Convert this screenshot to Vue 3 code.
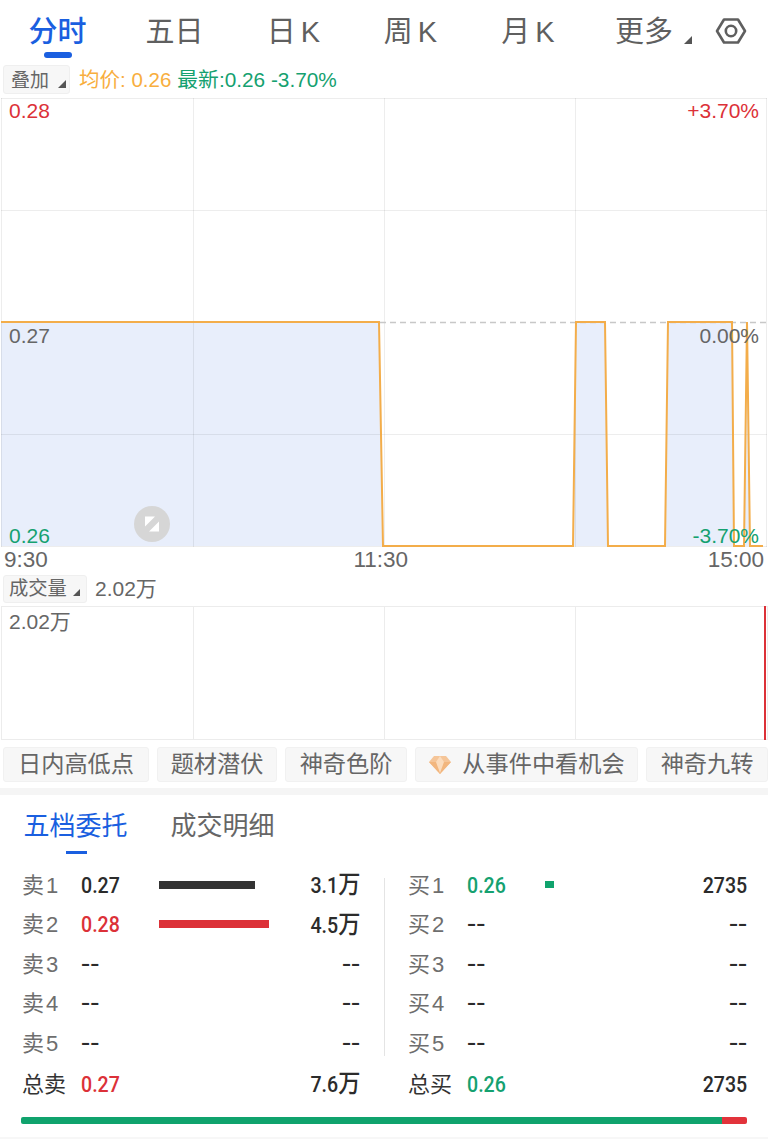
<script setup>
const tabs = ['分时', '五日', '日 K', '周 K', '月 K', '更多']
const pills = [
  { t: '日内高低点', w: 146 },
  { t: '题材潜伏', w: 120 },
  { t: '神奇色阶', w: 122 },
  { t: '从事件中看机会', w: 223, gem: true },
  { t: '神奇九转', w: 122 },
]
const sell = [
  { l: '卖', n: 1, p: '0.27', c: 'dark', bar: 96, bc: '#333333', q: '3.1', u: '万' },
  { l: '卖', n: 2, p: '0.28', c: 'red', bar: 110, bc: '#dc3138', q: '4.5', u: '万' },
  { l: '卖', n: 3, p: '--', c: 'dark', bar: 0, q: '--' },
  { l: '卖', n: 4, p: '--', c: 'dark', bar: 0, q: '--' },
  { l: '卖', n: 5, p: '--', c: 'dark', bar: 0, q: '--' },
]
const buy = [
  { l: '买', n: 1, p: '0.26', c: 'green', bar: 9, bc: '#10a36d', q: '2735' },
  { l: '买', n: 2, p: '--', c: 'dark', bar: 0, q: '--' },
  { l: '买', n: 3, p: '--', c: 'dark', bar: 0, q: '--' },
  { l: '买', n: 4, p: '--', c: 'dark', bar: 0, q: '--' },
  { l: '买', n: 5, p: '--', c: 'dark', bar: 0, q: '--' },
]
const cols = [
  { rows: sell, total: '总卖', tp: '0.27', tc: 'red', tq: '7.6', tu: '万' },
  { rows: buy, total: '总买', tp: '0.26', tc: 'green', tq: '2735' },
]
const line = 'M1 322 H379 L383 546 H573 L576 322 H605 L608 546 H665 L668 322 H732 L734 546 H744 L747 322 L750 546 H763'
const fill = line + ' V546 H1 Z'
</script>

<template>
  <div class="page">
    <nav class="nav">
      <div v-for="(t, i) in tabs" :key="t" class="tab" :class="{ on: i === 0 }">
        {{ t }}<i v-if="i === 5" class="tri tri-more"></i>
      </div>
      <svg class="hex" width="32" height="32" viewBox="0 0 32 32" fill="none" stroke="#5f5f5f" stroke-width="2.6">
        <path d="M9 4.5 H23 L30 16 L23 27.5 H9 L2 16 Z" stroke-linejoin="round" />
        <circle cx="16" cy="16" r="5.2" />
      </svg>
    </nav>

    <div class="legend top-legend">
      <div class="chip chip-add">叠加<i class="tri"></i></div>
      <span class="orange">均价: 0.26</span>
      <span class="green leg2">最新:0.26 -3.70%</span>
    </div>

    <div class="chart price">
      <svg class="plot" width="768" height="450" viewBox="0 97 768 450">
        <path :d="fill" fill="#e8eefb" />
        <g stroke="rgba(0,0,0,.07)" stroke-width="1" fill="none" shape-rendering="crispEdges">
          <path d="M1 98.5 H767 M1 210.5 H767 M1 434.5 H767 M1 546.5 H767" />
          <path d="M1.5 98 V547 M193.5 98 V547 M384.5 98 V547 M575.5 98 V547 M766.5 98 V547" />
        </g>
        <path d="M380 322.5 H767" stroke="#c8c8c8" stroke-width="1.4" stroke-dasharray="6 4" fill="none" />
        <path :d="line" stroke="#f3ad4a" stroke-width="2" fill="none" stroke-linejoin="miter" />
      </svg>
      <span class="lab tl red">0.28</span>
      <span class="lab tr red">+3.70%</span>
      <span class="lab ml gray">0.27</span>
      <span class="lab mr gray">0.00%</span>
      <span class="lab bl green">0.26</span>
      <span class="lab br green">-3.70%</span>
      <svg class="mark" width="36" height="36" viewBox="0 0 36 36">
        <circle cx="18" cy="18" r="18" fill="#d6d6d6" />
        <path d="M11 10.5 H21 L11 20.5 Z M25 25.5 H15 L25 15.5 Z" fill="#fff" />
      </svg>
    </div>

    <div class="times"><span>9:30</span><span>11:30</span><span>15:00</span></div>

    <div class="legend vol-legend">
      <div class="chip chip-vol">成交量<i class="tri"></i></div>
      <span class="gray vol-val">2.02万</span>
    </div>

    <div class="chart volume">
      <span class="lab vl gray">2.02万</span>
      <i class="vline"></i>
    </div>

    <div class="pills">
      <div v-for="p in pills" :key="p.t" class="pill" :style="{ width: p.w + 'px' }">
        <svg v-if="p.gem" class="gem" width="24" height="20" viewBox="0 0 24 20">
          <path d="M6 1 H18 L23 7 L12 19 L1 7 Z" fill="#f5c598" />
          <path d="M1 7 H23 L12 19 Z" fill="#f2b67e" />
          <path d="M8 7 L12 1 L16 7 L12 18 Z" fill="#fbdcbd" />
        </svg>
        {{ p.t }}
      </div>
    </div>

    <div class="gap"></div>

    <div class="subtabs">
      <div class="st on">五档委托<i></i></div>
      <div class="st">成交明细</div>
    </div>

    <div class="book">
      <div v-for="(c, ci) in cols" :key="ci" class="col" :class="ci ? 'col-b' : 'col-s'">
        <div v-for="r in c.rows" :key="r.l + r.n" class="row">
          <span class="rl">{{ r.l }} {{ r.n }}</span>
          <span class="num rp" :class="r.c"><b :class="{ dash: r.p === '--' }">{{ r.p }}</b></span>
          <span class="barwrap"><i v-if="r.bar" :style="{ width: r.bar + 'px', background: r.bc }" :class="{ dot: r.bar < 20 }"></i></span>
          <span class="num rq"><b :class="{ dash: r.q === '--' }">{{ r.q }}<em v-if="r.u">{{ r.u }}</em></b></span>
        </div>
        <div class="row total">
          <span class="rl tt">{{ c.total }}</span>
          <span class="num rp" :class="c.tc"><b>{{ c.tp }}</b></span>
          <span class="barwrap"></span>
          <span class="num rq"><b>{{ c.tq }}<em v-if="c.tu">{{ c.tu }}</em></b></span>
        </div>
      </div>
      <i class="divider"></i>
    </div>

    <div class="ratio"><i class="rg"></i><i class="rr"></i></div>
    <div class="foot"></div>
  </div>
</template>

<style>
html, body { margin: 0; background: #fff; }
</style>

<style scoped>
.page { width: 768px; height: 1139px; overflow: hidden; position: relative; background: #fff;
  font-family: "Liberation Sans", "Noto Sans CJK SC", sans-serif; color: #5f5f5f; }
i { display: block; font-style: normal; }
.red { color: #dc3138; }
.green { color: #15a170; }
.orange { color: #f8ae3e; }
.gray { color: #666; }
.dark { color: #2b2b2b; }

.nav { height: 65px; display: flex; position: relative; }
.tab { flex: none; height: 63px; line-height: 64px; text-align: center; font-size: 29px; word-spacing: -3px; position: relative; color: #5f5f5f; }
.tab:nth-child(1) { width: 115px; }
.tab:nth-child(2) { width: 119px; }
.tab:nth-child(3) { width: 119px; }
.tab:nth-child(4) { width: 115px; }
.tab:nth-child(5) { width: 120px; }
.tab:nth-child(6) { width: 112px; }
.tab.on { color: #1a5fe0; font-weight: 500; }
.tab.on::after { content: ""; position: absolute; left: 44px; top: 52px; width: 28px; height: 6px; border-radius: 3px; background: #1a5fe0; }
.tri { display: inline-block; width: 0; height: 0; border-style: solid; border-width: 0 0 8px 8px; border-color: transparent transparent #555 transparent; }
.tri-more { position: absolute; left: 96px; top: 36px; }
.hex { position: absolute; left: 715px; top: 15px; }

.legend { display: flex; align-items: flex-start; font-size: 20.5px; line-height: 30px; white-space: nowrap; }
.top-legend { height: 32px; }
.chip { background: #f7f7f7; border: 1px solid #efefef; border-radius: 3px; box-sizing: border-box; position: relative; color: #666; }
.chip .tri { position: absolute; right: 3px; bottom: 5px; }
.chip-add { margin-left: 3px; width: 67px; height: 29px; padding-left: 7px; font-size: 19px; line-height: 29px; }
.orange { margin-left: 9px; }
.leg2 { margin-left: 6px; font-size: 20.8px; }

.chart { position: relative; }
.price { height: 450px; }
.plot { display: block; }
.lab { position: absolute; font-size: 21px; line-height: 24px; white-space: nowrap; }
.tl { left: 9px; top: 2px; }
.tr { right: 9px; top: 2px; }
.ml { left: 9px; top: 227px; }
.mr { right: 9px; top: 227px; }
.bl { left: 9px; top: 427px; }
.br { right: 9px; top: 427px; }
.mark { position: absolute; left: 134px; top: 409px; }

.times { height: 29px; margin-top: -1px; padding: 0 4px; display: flex; justify-content: space-between; font-size: 22.5px; line-height: 27px; color: #666; }
.times span:nth-child(2) { margin-left: 6px; }
.vol-legend { height: 31px; }
.chip-vol { margin-left: 3px; width: 84px; height: 28px; padding-left: 5px; font-size: 19.3px; line-height: 26px; }
.chip-vol .tri { right: 6px; bottom: 6px; border-width: 0 0 7px 7px; }
.vol-val { margin-left: 8px; font-size: 21px; line-height: 27px; }

.volume { height: 134px; box-sizing: border-box; margin-left: 1px; border: 1px solid #ececec;
  background: linear-gradient(#ececec, #ececec) 191px 0 / 1px 100% no-repeat,
    linear-gradient(#ececec, #ececec) 382px 0 / 1px 100% no-repeat,
    linear-gradient(#ececec, #ececec) 573px 0 / 1px 100% no-repeat; }
.vl { left: 7px; top: 3px; font-size: 21px; }
.vline { position: absolute; right: 1px; top: -1px; bottom: -1px; width: 2px; background: #dc3138; }

.pills { display: flex; gap: 8px; margin-top: 7px; margin-left: 3px; height: 35px; white-space: nowrap; }
.pill { flex: none; height: 35px; box-sizing: border-box; background: #f7f7f7; border: 1px solid #f1f1f1; border-radius: 3px;
  text-align: center; font-size: 23.2px; line-height: 33px; color: #666; display: flex; justify-content: center; align-items: center; gap: 10px; }
.gem { flex: none; }

.gap { height: 7px; margin-top: 6px; background: #f5f5f5; }

.subtabs { height: 66px; padding-left: 23.5px; display: flex; gap: 43px; }
.st { font-size: 26px; line-height: 62px; color: #666; position: relative; }
.st.on { color: #1a5fe0; }
.st.on i { position: absolute; left: 42px; top: 56px; width: 21px; height: 3px; background: #1a5fe0; }

.book { display: flex; position: relative; height: 240px; margin-top: 2px; }
.col { width: 384px; box-sizing: border-box; }
.col-s { padding-left: 22px; padding-right: 24px; }
.col-b { padding-left: 24px; padding-right: 21px; }
.row { height: 39.5px; display: flex; align-items: center; }
.rl { width: 59px; flex: none; font-size: 22px; word-spacing: -4px; color: #6e6e6e; }
.tt { color: #333; }
.rp { width: 78px; flex: none; }
.barwrap { flex: 1; height: 8px; display: block; margin-top: 4px; }
.barwrap i { height: 8px; }
.barwrap i.dot { height: 7px; }
.num { font-family: Roboto, "Noto Sans CJK SC", sans-serif; font-size: 22.5px; line-height: 24px; white-space: nowrap; padding-top: 4px; }
.num b { display: inline-block; font-weight: 500; transform: scaleX(.87); transform-origin: left center; }
.num b.dash { transform: scaleX(1.2); }
.num em { font-style: normal; font-size: 25.5px; line-height: 24px; }
.rq { text-align: right; color: #2b2b2b; }
.rq b { transform-origin: right center; }
.total { height: 42.5px; }
.divider { position: absolute; left: 384px; top: 15px; width: 1px; height: 178px; background: #e4e4e4; }

.ratio { position: absolute; left: 21px; top: 1117px; width: 726px; height: 7px; display: flex; border-radius: 2px; overflow: hidden; }
.rg { width: 701px; background: #10a36d; }
.rr { flex: 1; background: #e2333b; }
.foot { position: absolute; left: 0; right: 0; top: 1137px; height: 2px; background: #f7f7f7; }
</style>
